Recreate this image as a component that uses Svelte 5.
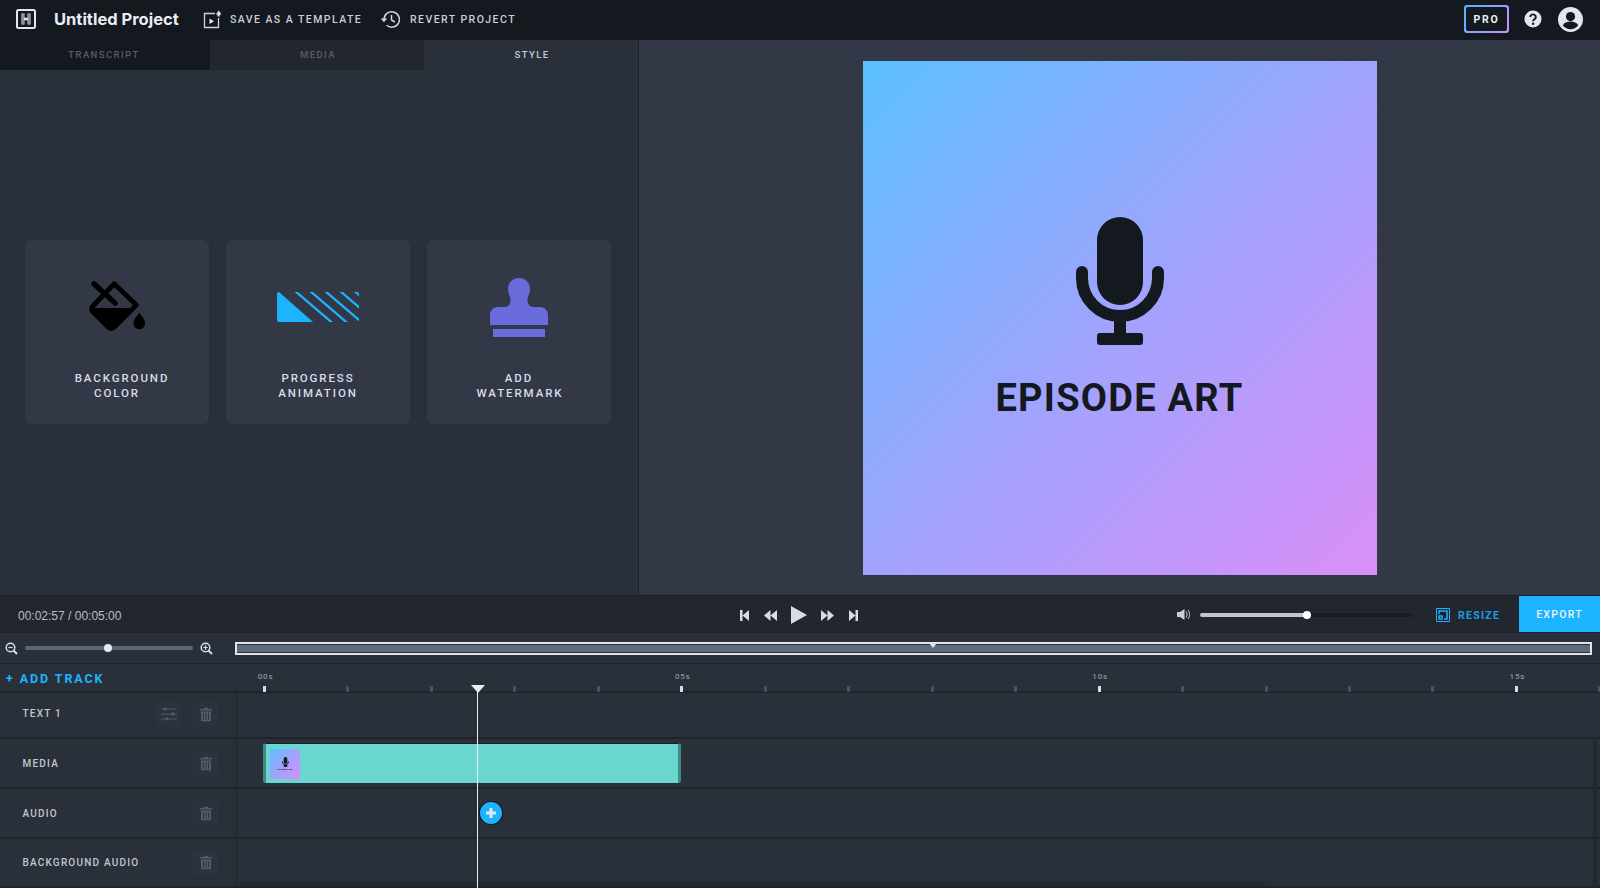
<script>
  const ticks = Array.from({ length: 17 }, (_, i) => ({
    x: 27.5 + i * 83.46,
    major: i % 5 === 0,
    label: i % 5 === 0 ? String(i).padStart(2, '0') + 's' : ''
  }));
  const tracks = [
    { name: 'TEXT 1', tune: true, h: 46, cls: 'first' },
    { name: 'MEDIA', clip: true, h: 50, cls: '' },
    { name: 'AUDIO', add: true, h: 50, cls: '' },
    { name: 'BACKGROUND AUDIO', h: 49, cls: '' }
  ];
  const cards = [
    { kind: 'fill', lines: ['BACKGROUND', 'COLOR'], off: 'off-a' },
    { kind: 'progress', lines: ['PROGRESS', 'ANIMATION'], off: '' },
    { kind: 'stamp', lines: ['ADD', 'WATERMARK'], off: 'off-c' }
  ];
</script>

<div class="app">
  <header class="top">
    <svg class="logo" width="20" height="20" viewBox="0 0 20 20"><rect x="1" y="1" width="18" height="18" rx="1.5" fill="none" stroke="#e3e6ee" stroke-width="2"/><path d="M5.5 4.5h3v4.2h3V4.5h3v11h-3v-4.3h-3v4.3h-3z" fill="#e3e6ee"/><path d="M7 5v10M13 5v10" stroke="#14181f" stroke-width=".8"/></svg>
    <span class="title">Untitled Project</span>
    <button class="tool t-save">
      <svg width="19" height="19" viewBox="0 0 19 19"><path d="M12 3.5H1.5v14h14V8" fill="none" stroke="#cfd3dc" stroke-width="1.3"/><path d="M6.5 8.5l4.5 2.7-4.5 2.7z" fill="#e3e6ee"/><path d="M15.7 0.5l2.8 4h-1.7v2h-2.2v-2h-1.700z" fill="#e3e6ee"/></svg>
      SAVE AS A TEMPLATE
    </button>
    <button class="tool t-rev">
      <svg width="20" height="19" viewBox="0 0 20 19"><path d="M4 9.5a7.7 7.7 0 1 1 2.6 5.8" fill="none" stroke="#cfd3dc" stroke-width="1.5"/><path d="M0.6 8.5h6.6l-3.3 3.8z" fill="#cfd3dc"/><path d="M11.5 5v5l3.3 2" fill="none" stroke="#cfd3dc" stroke-width="1.5"/></svg>
      REVERT PROJECT
    </button>
    <div class="top-right">
      <div class="pro"><span>PRO</span></div>
      <svg class="help" width="18" height="18" viewBox="0 0 18 18"><circle cx="9" cy="9" r="8.500" fill="#e3e6ee"/><path d="M6.200 7a2.800 2.600 0 1 1 4.300 2.200c-1 .7-1.400 1-1.400 2" fill="none" stroke="#14181f" stroke-width="1.900"/><circle cx="9.100" cy="13.700" r="1.200" fill="#14181f"/></svg>
      <svg class="user" width="25" height="25" viewBox="0 0 25 25"><circle cx="12.500" cy="12.500" r="12.500" fill="#e3e6ee"/><circle cx="12.500" cy="9.600" r="4.600" fill="#14181f"/><path d="M4.800 18.600c1.200-3 4.400-4 7.700-4s6.500 1 7.700 4a10 10 0 0 1-15.400 0z" fill="#14181f"/></svg>
    </div>
  </header>

  <main class="main">
    <section class="left">
      <nav class="tabs">
        <div class="tab one">TRANSCRIPT</div>
        <div class="tab two">MEDIA</div>
        <div class="tab three">STYLE</div>
      </nav>
      <div class="cards">
        {#each cards as c}
          <div class="card">
            <div class="icon-box" class:lower={c.kind === 'progress'}>
              {#if c.kind === 'fill'}
                <svg class="fill-icon" width="60" height="56" viewBox="0 0 62 58"><path d="M27 5L50 27 27 50a4 4 0 0 1-6 0L5 34a4 4 0 0 1 0-6z" fill="none" stroke="#000" stroke-width="5" stroke-linejoin="round"/><path d="M5 30H48L27 50a4 4 0 0 1-6 0L5 35z" fill="#000"/><path d="M6 5L28 25" stroke="#000" stroke-width="5.500" stroke-linecap="round"/><path d="M53 35c3 4.500 6 7 6 11a6 6 0 0 1-12 0c0-4 3-6.500 6-11z" fill="#000"/></svg>
              {:else if c.kind === 'progress'}
                <svg width="82" height="30" viewBox="0 0 82 30"><defs><clipPath id="pc"><rect width="82" height="30" rx="2"/></clipPath></defs><g clip-path="url(#pc)" fill="#1cb4ff"><path d="M0 0h2L36 30H0z"/><path d="M17.500 0h3.500L56 30h-3.500z"/><path d="M32.500 0h3.500L71 30h-3.500z"/><path d="M47.500 0h3.500L86 30h-3.500z"/><path d="M62.500 0h3.500L101 30h-3.500z"/><path d="M77 0h5L116 30h-5z"/></g></svg>
              {:else}
                <svg width="60" height="60" viewBox="0 0 60 60"><path d="M30 0c6 0 11 4.500 11 11 0 5-2.500 7-2.500 11 0 4 2 7 6 7h6c5 0 8.500 3.500 8.500 8v10H1V37c0-4.500 3.500-8 8.500-8h6c4 0 6-3 6-7 0-4-2.500-6-2.500-11C19 4.500 24 0 30 0z" fill="#6b6cdc"/><rect x="4" y="51" width="52" height="8" fill="#6b6cdc"/></svg>
              {/if}
            </div>
            <div class="card-label {c.off}">{#each c.lines as l}<div>{l}</div>{/each}</div>
          </div>
        {/each}
      </div>
    </section>
    <section class="preview">
      <div class="art">
        <svg class="mic" width="88" height="129" viewBox="0 0 88 129"><rect x="21" y="0" width="46" height="88" rx="23" fill="#14191f"/><path d="M6 55v6a38 38 0 0 0 76 0v-6" fill="none" stroke="#14191f" stroke-width="12" stroke-linecap="round"/><rect x="38" y="100" width="12" height="20" fill="#14191f"/><rect x="21" y="116" width="46" height="12" rx="3" fill="#14191f"/></svg>
        <div class="art-title">EPISODE ART</div>
      </div>
    </section>
  </main>

  <div class="controls">
    <div class="time">00:02:57 / 00:05:00</div>
    <div class="transport">
      <svg class="edge-a" width="9" height="11" viewBox="0 0 9 11"><path d="M0 0h2.500v11H0zM9 0v11L2.500 5.500z" fill="#d8dce8"/></svg>
      <svg width="13" height="11" viewBox="0 0 13 11"><path d="M6.500 0v11L0 5.500zM13 0v11L6.500 5.500z" fill="#d8dce8"/></svg>
      <svg width="16" height="18" viewBox="0 0 16 18"><path d="M0 0l16 9-16 9z" fill="#d8dce8"/></svg>
      <svg width="13" height="11" viewBox="0 0 13 11"><path d="M0 0l6.500 5.500L0 11zM6.500 0L13 5.500 6.500 11z" fill="#d8dce8"/></svg>
      <svg class="edge-b" width="9" height="11" viewBox="0 0 9 11"><path d="M0 0l6.500 5.500L0 11zM6.500 0H9v11H6.500z" fill="#d8dce8"/></svg>
    </div>
    <svg class="vol" width="14" height="11" viewBox="0 0 14 11"><path d="M0 3h3l4.500-3v11L3 8H0z" fill="#c9ced8"/><path d="M9 2.500c1.400 1.800 1.400 4.200 0 6M11 1c2.200 2.700 2.200 6.300 0 9" fill="none" stroke="#c9ced8" stroke-width="1"/></svg>
    <div class="vol-track"><div class="vol-fill"></div><div class="vol-knob"></div></div>
    <div class="resize">
      <svg width="14" height="14" viewBox="0 0 14 14"><path d="M.5.5h13v13H.5z" fill="#1c2129" stroke="#1cb4ff"/><path d="M3 6V3h8v8h-3M3 8h3v3H3z" fill="none" stroke="#1cb4ff" stroke-width="1.500"/></svg>
      <span>RESIZE</span>
    </div>
    <button class="export">EXPORT</button>
  </div>

  <div class="zoomrow">
    <svg class="zi" width="13" height="13" viewBox="0 0 13 13"><circle cx="5.500" cy="5.500" r="4.300" fill="none" stroke="#d8dce8" stroke-width="1.500"/><path d="M8.500 8.500L12 12" stroke="#d8dce8" stroke-width="2"/><path d="M3.300 5.500h4.400" stroke="#d8dce8" stroke-width="1.200"/></svg>
    <div class="z-track"><div class="z-knob"></div></div>
    <svg class="zi zi2" width="13" height="13" viewBox="0 0 13 13"><circle cx="5.500" cy="5.500" r="4.300" fill="none" stroke="#d8dce8" stroke-width="1.500"/><path d="M8.500 8.500L12 12" stroke="#d8dce8" stroke-width="2"/><path d="M3.300 5.500h4.400M5.500 3.300v4.400" stroke="#d8dce8" stroke-width="1.200"/></svg>
    <div class="overview"><div class="ov-mark"></div></div>
  </div>

  <section class="timeline">
    <div class="ruler">
      <div class="add-track">+ ADD TRACK</div>
      <div class="scale">
        {#each ticks as t}
          <div class="tick" class:major={t.major} style="left:{t.x}px"></div>
          {#if t.label}<div class="tick-label" style="left:{t.x}px">{t.label}</div>{/if}
        {/each}
      </div>
    </div>
    {#each tracks as t}
      <div class="row {t.cls}" style="height:{t.h}px">
        <div class="row-head">
          <span class="row-name">{t.name}</span>
          {#if t.tune}
            <div class="rbtn tune"><svg width="16" height="13" viewBox="0 0 16 13"><path d="M0 1.500h16M0 6.500h16M0 11.500h16" stroke="#535a67" stroke-width="1.200"/><circle cx="4" cy="1.500" r="1.700" fill="#535a67"/><circle cx="12" cy="6.500" r="1.700" fill="#535a67"/><circle cx="6" cy="11.500" r="1.700" fill="#535a67"/></svg></div>
          {/if}
          <div class="rbtn"><svg width="12" height="14" viewBox="0 0 12 14"><path d="M0 1.500h12v1.500H0zM4 0h4v1.500H4z" fill="#535a67"/><path d="M1 4h10v10H1z" fill="#535a67"/><path d="M3.500 5.500v7M6 5.500v7M8.500 5.500v7" stroke="#2d333d" stroke-width=".9"/></svg></div>
        </div>
        <div class="row-body">
          {#if t.clip}
            <div class="clip">
              <div class="thumb">
                <svg width="7" height="10" viewBox="0 0 88 129"><rect x="21" width="46" height="88" rx="23" fill="#14191f"/><path d="M6 55v6a38 38 0 0 0 76 0v-6" fill="none" stroke="#14191f" stroke-width="12"/><rect x="21" y="100" width="46" height="28" fill="#14191f"/></svg>
                <span>EPISODE ART</span>
              </div>
            </div>
          {/if}
          {#if t.add}
            <div class="plus"><svg width="12" height="12" viewBox="0 0 12 12"><path d="M6 1v10M1 6h10" stroke="#dfe8f2" stroke-width="3"/></svg></div>
          {/if}
        </div>
      </div>
    {/each}
    <div class="scrollbar-h"></div>
    <div class="scrollbar-v"></div>
    <div class="playhead"></div>
  </section>
</div>

<style>
  :global(body) { margin: 0; background: #2a303a; }
  .app { width: 1600px; height: 888px; overflow: hidden; display: flex; flex-direction: column; font-family: Roboto, "Liberation Sans", sans-serif; color: #d8dce8; }
  button { font-family: inherit; background: none; border: 0; padding: 0; color: inherit; }

  .top { height: 40px; flex: none; background: #14181f; display: flex; align-items: center; padding: 0 0 2px 16px; box-sizing: border-box; }
  .logo { flex: none; }
  .title { margin-left: 18px; width: 150px; font: 700 16.5px Inter, Lato, sans-serif; color: #e9ecf2; white-space: nowrap; }
  .tool { display: flex; align-items: center; font-size: 10.5px; font-weight: 500; letter-spacing: 1.45px; color: #c9ced8; white-space: nowrap; }
  .t-save { gap: 8px; width: 177px; margin-left: -1px; }
  .t-rev { gap: 10px; }
  .top-right { margin-left: auto; display: flex; align-items: center; }
  .pro { width: 45px; height: 28px; box-sizing: border-box; border-radius: 3px; padding: 2px; background: linear-gradient(135deg, #4db5ff, #d38cf5); display: flex; }
  .pro span { flex: 1; background: #14181f; border-radius: 2px; display: flex; align-items: center; justify-content: center; font-size: 10.5px; font-weight: 700; letter-spacing: 1.8px; color: #eef0f5; }
  .help { margin-left: 15px; }
  .user { margin-left: 16px; margin-right: 17px; }

  .main { height: 555px; flex: none; display: flex; }
  .left { width: 638px; flex: none; background: #2a303a; border-right: 1px solid #1d2128; display: flex; flex-direction: column; }
  .tabs { display: flex; height: 30px; flex: none; }
  .tab { display: flex; align-items: center; justify-content: center; font-size: 9.5px; font-weight: 500; letter-spacing: 1.4px; padding-bottom: 2px; box-sizing: border-box; }
  .one { width: 210px; background: #14181f; color: #565d6b; padding-right: 2px; }
  .two { width: 214px; background: #22272f; color: #565d6b; padding-left: 2px; }
  .three { width: 214px; background: #2a303a; color: #c5cad4; padding-left: 2px; }
  .cards { display: flex; gap: 17px; padding: 170px 0 0 25px; }
  .card { width: 184px; height: 184px; background: #323846; border-radius: 6px; display: flex; flex-direction: column; align-items: center; }
  .icon-box { height: 131px; padding-top: 38px; box-sizing: border-box; display: flex; justify-content: center; align-items: flex-start; }
  .icon-box.lower { padding-top: 52px; }
  .fill-icon { margin: 1px 0 0 2px; }
  .card-label { font-size: 11.5px; font-weight: 500; letter-spacing: 1.9px; line-height: 15px; text-align: center; color: #d9dce8; }
  .off-a div:first-child { margin-left: 10px; }
  .off-c div:last-child { margin-left: 2px; }

  .preview { flex: 1; background: #323846; display: flex; align-items: center; justify-content: center; }
  .art { width: 514px; height: 514px; background: linear-gradient(135deg, #5bc0ff 0%, #a3a2fd 52%, #da8ef8 100%); display: flex; flex-direction: column; align-items: center; padding-top: 156px; box-sizing: border-box; }
  .mic { flex: none; }
  .art-title { margin-top: 29px; font-size: 38px; line-height: 46px; font-weight: 700; letter-spacing: 1.25px; color: #14191f; }

  .controls { height: 38px; flex: none; background: #22272f; border-top: 1px solid #1a1e25; border-bottom: 1px solid #1d2128; box-sizing: border-box; display: flex; align-items: center; }
  .time { width: 740px; flex: none; padding: 4px 0 0 18px; box-sizing: border-box; font: 12px "Liberation Sans", sans-serif; color: #b9bdc6; }
  .transport { display: flex; align-items: center; gap: 14px; width: 437px; flex: none; padding-top: 2px; box-sizing: border-box; }
  .edge-a { margin-right: 1px; }
  .edge-b { margin-left: 1px; }
  .vol { flex: none; padding-top: 1px; }
  .vol-track { position: relative; width: 213px; height: 4px; margin: 1px 0 0 9px; flex: none; background: #181c24; border-radius: 2px; }
  .vol-fill { width: 107px; height: 4px; background: #c0c6d0; border-radius: 2px; }
  .vol-knob { position: absolute; left: 103px; top: -2px; width: 8px; height: 8px; border-radius: 50%; background: #fff; }
  .resize { display: flex; align-items: center; gap: 8px; margin: 2px 0 0 23px; width: 83px; flex: none; font-size: 10.5px; font-weight: 700; letter-spacing: 1.3px; color: #1b9fe3; }
  .export { width: 81px; height: 36px; background: #1cb4ff; color: #edf2f7; font-size: 10.5px; font-weight: 500; letter-spacing: 1.25px; flex: none; }

  .zoomrow { height: 31px; flex: none; background: #2a303a; border-bottom: 1px solid #1f232b; box-sizing: border-box; display: flex; align-items: center; padding-left: 5px; }
  .zi { flex: none; }
  .z-track { position: relative; width: 168px; height: 4px; margin-left: 7px; background: #5e6878; border-radius: 2px; flex: none; }
  .z-knob { position: absolute; left: 79px; top: -2px; width: 8px; height: 8px; border-radius: 50%; background: #e6e9ef; }
  .zi2 { margin-left: 7px; }
  .overview { position: relative; margin-left: 22px; width: 1357px; height: 13px; box-sizing: border-box; border: 2px solid #dfe3ea; background: linear-gradient(#5e6a7e, #5e6a7e) center / 100% 7px no-repeat #2a303a; flex: none; }
  .ov-mark { position: absolute; left: 692px; top: -1px; width: 0; height: 0; border-left: 4px solid transparent; border-right: 4px solid transparent; border-top: 5px solid #dfe3ea; }

  .timeline { position: relative; flex: 1; background: #2a303a; }
  .ruler { height: 29px; display: flex; border-bottom: 2px solid #1f232b; box-sizing: border-box; }
  .add-track { width: 237px; flex: none; box-sizing: border-box; padding: 7px 0 0 6px; font-size: 12.5px; font-weight: 700; letter-spacing: 1.9px; color: #1cb4ff; white-space: nowrap; }
  .scale { position: relative; flex: 1; }
  .tick { position: absolute; bottom: -1px; width: 3px; height: 6px; margin-left: -1.500px; background: #4a515e; }
  .tick.major { background: #d8dce8; }
  .tick-label { position: absolute; top: 8px; margin-left: 1px; transform: translateX(-50%); font-size: 8px; font-weight: 500; letter-spacing: .8px; color: #8a909c; }
  .row { display: flex; box-sizing: border-box; border-bottom: 2px solid #1f232b; }
  .row.first .row-head { padding-bottom: 3px; }
  .row.first .rbtn { margin-top: -1px; }
  .row-head { width: 237px; flex: none; box-sizing: border-box; border-right: 1px solid #1f232b; display: flex; align-items: center; padding-left: 22.500px; position: relative; }
  .row-name { font-size: 10px; font-weight: 500; letter-spacing: 1.200px; color: #c2c6d0; white-space: nowrap; }
  .rbtn { position: absolute; left: 193px; top: 50%; transform: translateY(-50%); width: 25px; height: 25px; background: #2d333d; display: flex; align-items: center; justify-content: center; border-radius: 2px; }
  .rbtn.tune { left: 156px; }
  .row-body { position: relative; flex: 1; display: flex; align-items: center; }
  .clip { margin-left: 26px; width: 418px; height: 40px; box-sizing: border-box; background: #69d6cf; border-left: 3px solid #3e8a88; border-right: 3px solid #3e8a88; border-top: 1px solid #1a1e25; border-radius: 2px; display: flex; align-items: center; padding-left: 4px; }
  .thumb { width: 30px; height: 30px; background: linear-gradient(135deg, #5bc0ff, #a3a2fd 52%, #da8ef8); display: flex; flex-direction: column; align-items: center; justify-content: center; gap: 1px; }
  .thumb span { font-size: 2.500px; line-height: 3px; font-weight: 700; color: #14191f; white-space: nowrap; }
  .plus { position: absolute; left: 243px; top: 13px; width: 22px; height: 22px; border-radius: 50%; background: #1cb4ff; box-shadow: 0 0 0 1px #14181f; display: flex; align-items: center; justify-content: center; }
  .scrollbar-h { position: absolute; left: 240px; top: 217px; width: 1025px; height: 5px; border-radius: 3px; background: #252a33; }
  .scrollbar-v { position: absolute; right: 3px; top: 74px; width: 4px; height: 150px; background: #232830; }
  .playhead { position: absolute; left: 477px; top: 21px; bottom: 0; width: 1px; background: #e9ecf2; }
  .playhead::before { content: ""; position: absolute; left: -6.500px; top: 0; width: 0; height: 0; border-left: 7px solid transparent; border-right: 7px solid transparent; border-top: 8px solid #e9ecf2; }
</style>
